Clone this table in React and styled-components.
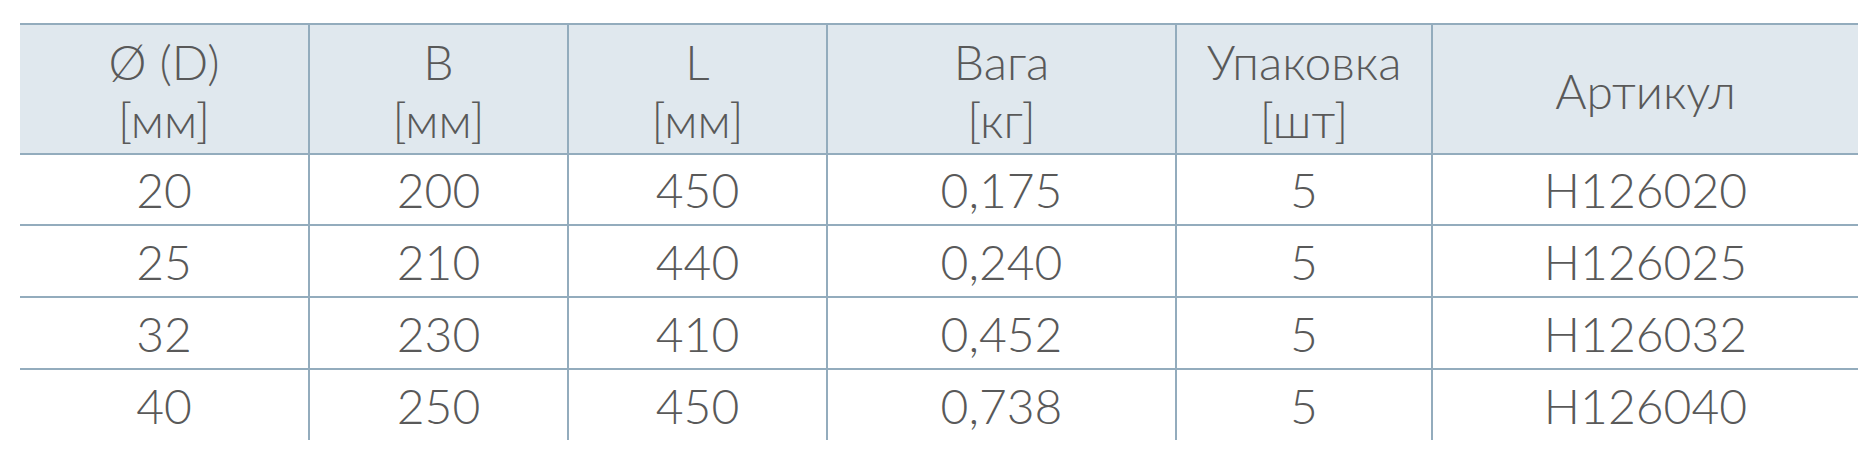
import React from 'react';
import styled, { createGlobalStyle } from 'styled-components';

const GlobalStyle = createGlobalStyle`
  html, body {
    margin: 0;
    padding: 0;
    background: #ffffff;
  }
`;

const columns = [
  { title: 'Ø (D)', unit: '[мм]' },
  { title: 'B', unit: '[мм]' },
  { title: 'L', unit: '[мм]' },
  { title: 'Вага', unit: '[кг]' },
  { title: 'Упаковка', unit: '[шт]' },
  { title: 'Артикул' },
];

const rows = [
  ['20', '200', '450', '0,175', '5', 'H126020'],
  ['25', '210', '440', '0,240', '5', 'H126025'],
  ['32', '230', '410', '0,452', '5', 'H126032'],
  ['40', '250', '450', '0,738', '5', 'H126040'],
];

const LINE = '#93acbd';

const Page = styled.div`
  padding: 23px 0 0 20px;
  font-family: Lato, "Open Sans", sans-serif;
  font-weight: 300;
  color: #595959;
`;

const Grid = styled.div`
  display: grid;
  width: 1838px;
  grid-template-columns: 290px 259px 259px 349px 256px 425px;
  grid-template-rows: 132px 71px 72px 72px 70px;
`;

const Cell = styled.div`
  box-sizing: border-box;
  display: flex;
  flex-direction: column;
  align-items: center;
  justify-content: center;
  text-align: center;
  font-size: 48px;
  line-height: 58px;
  border-right: ${p => (p.$last ? 'none' : `2px solid ${LINE}`)};
  border-bottom: ${p => (p.$bottom ? 'none' : `2px solid ${LINE}`)};
`;

const HeadCell = styled(Cell)`
  background: #e0e8ee;
  border-top: 2px solid ${LINE};
  padding-top: 4px;
`;

const DataCell = styled(Cell)`
  padding-top: 1px;
`;

export default function App() {
  return (
    <Page>
      <GlobalStyle />
      <Grid>
        {columns.map((c, i) => (
          <HeadCell key={c.title} $last={i === columns.length - 1}>
            <span>{c.title}</span>
            {c.unit && <span>{c.unit}</span>}
          </HeadCell>
        ))}
        {rows.map((r, ri) =>
          r.map((v, ci) => (
            <DataCell
              key={`${ri}-${ci}`}
              $last={ci === r.length - 1}
              $bottom={ri === rows.length - 1}
            >
              {v}
            </DataCell>
          ))
        )}
      </Grid>
    </Page>
  );
}
